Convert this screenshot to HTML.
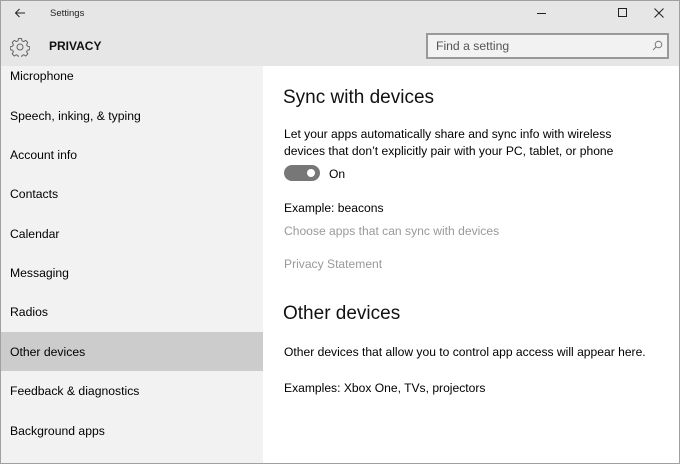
<!DOCTYPE html>
<html><head><style>
*{margin:0;padding:0;box-sizing:border-box}
body{width:680px;height:464px;overflow:hidden;font-family:"Liberation Sans",sans-serif;background:#fff;position:relative}
.frame{position:absolute;inset:0;border:1px solid #a0a0a0}
.top{position:absolute;left:1px;top:1px;right:1px;height:65px;background:#e6e6e6}
.side{position:absolute;left:1px;top:66px;width:262px;bottom:1px;background:#f2f2f2}
.item{position:absolute;left:0;width:262px;height:39px;font-size:12.2px;color:#000;padding-left:9px;line-height:39px}
.sel{background:#cccccc}
.t{position:absolute;white-space:nowrap}
</style></head><body>
<div class="top"></div>
<svg style="position:absolute;left:14px;top:8px" width="12" height="10" viewBox="0 0 12 10"><path d="M11 5H1.5M5.5 1L1.5 5l4 4" fill="none" stroke="#222" stroke-width="1"/></svg>
<div class="t" style="left:50px;top:8px;font-size:9.5px;color:#222">Settings</div>
<div style="position:absolute;left:537px;top:13px;width:9px;height:1px;background:#222"></div>
<div style="position:absolute;left:618px;top:8px;width:9px;height:9px;border:1px solid #222"></div>
<svg style="position:absolute;left:654px;top:8px" width="10" height="10" viewBox="0 0 10 10"><path d="M0.5 0.5l9 9M9.5 0.5l-9 9" stroke="#222" stroke-width="1"/></svg>
<svg style="position:absolute;left:10px;top:37px" width="20" height="20" viewBox="0 0 20 20"><g fill="none" stroke="#666" stroke-width="1"><circle cx="10" cy="10" r="3"/><path d="M8.5 1.5h3l.5 2.3 1.6.8 2.1-1.2 2.1 2.1-1.2 2.1.8 1.6 2.3.5v3l-2.3.5-.8 1.6 1.2 2.1-2.1 2.1-2.1-1.2-1.6.8-.5 2.3h-3l-.5-2.3-1.6-.8-2.1 1.2-2.1-2.1 1.2-2.1-.8-1.6-2.3-.5v-3l2.3-.5.8-1.6-1.2-2.1 2.1-2.1 2.1 1.2 1.6-.8z"/></g></svg>
<div class="t" style="left:49px;top:39px;font-size:12px;font-weight:bold;color:#111">PRIVACY</div>
<div style="position:absolute;left:426px;top:33px;width:243px;height:26px;border:2px solid #999;background:#f2f2f2"></div>
<div class="t" style="left:436px;top:39px;font-size:12.2px;color:#555">Find a setting</div>
<svg style="position:absolute;left:652px;top:40px" width="11" height="11" viewBox="0 0 11 11"><circle cx="6.5" cy="4.5" r="3.3" fill="none" stroke="#777"/><path d="M4 7L1 10" stroke="#777"/></svg>
<div class="side">
<div class="item" style="top:-9px">Microphone</div>
<div class="item" style="top:31px">Speech, inking, &amp; typing</div>
<div class="item" style="top:70px">Account info</div>
<div class="item" style="top:109px">Contacts</div>
<div class="item" style="top:149px">Calendar</div>
<div class="item" style="top:188px">Messaging</div>
<div class="item" style="top:227px">Radios</div>
<div class="item sel" style="top:266px;line-height:41px">Other devices</div>
<div class="item" style="top:306px">Feedback &amp; diagnostics</div>
<div class="item" style="top:346px">Background apps</div>
</div>
<div class="t" style="left:283px;top:87px;font-size:19px;color:#111">Sync with devices</div>
<div class="t" style="left:284px;top:126px;font-size:12.1px;line-height:17px;color:#000">Let your apps automatically share and sync info with wireless<br>devices that don’t explicitly pair with your PC, tablet, or phone</div>
<div style="position:absolute;left:284px;top:165px;width:36px;height:16px;border-radius:8px;background:#777"></div>
<div style="position:absolute;left:307px;top:169px;width:8px;height:8px;border-radius:50%;background:#fff"></div>
<div class="t" style="left:329px;top:167px;font-size:12.1px">On</div>
<div class="t" style="left:284px;top:201px;font-size:12.1px">Example: beacons</div>
<div class="t" style="left:284px;top:224px;font-size:12.1px;color:#999">Choose apps that can sync with devices</div>
<div class="t" style="left:284px;top:257px;font-size:12.1px;color:#999">Privacy Statement</div>
<div class="t" style="left:283px;top:303px;font-size:19px;color:#111">Other devices</div>
<div class="t" style="left:284px;top:345px;font-size:12.1px">Other devices that allow you to control app access will appear here.</div>
<div class="t" style="left:284px;top:381px;font-size:12.1px">Examples: Xbox One, TVs, projectors</div>
<div class="frame"></div>
</body></html>
